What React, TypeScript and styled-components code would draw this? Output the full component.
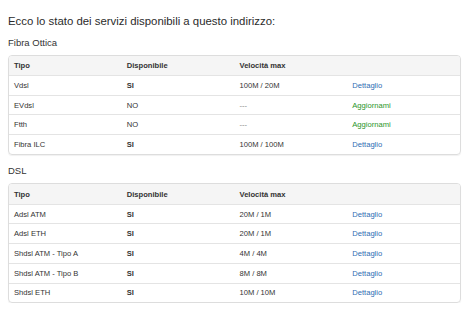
import React from 'react';
import styled, { createGlobalStyle } from 'styled-components';

interface Service {
  tipo: string;
  disponibile: boolean;
  velocita: string;
}

const fibra: Service[] = [
  { tipo: 'Vdsl', disponibile: true, velocita: '100M / 20M' },
  { tipo: 'EVdsl', disponibile: false, velocita: '---' },
  { tipo: 'Ftth', disponibile: false, velocita: '---' },
  { tipo: 'Fibra ILC', disponibile: true, velocita: '100M / 100M' }
];

const dsl: Service[] = [
  { tipo: 'Adsl ATM', disponibile: true, velocita: '20M / 1M' },
  { tipo: 'Adsl ETH', disponibile: true, velocita: '20M / 1M' },
  { tipo: 'Shdsl ATM - Tipo A', disponibile: true, velocita: '4M / 4M' },
  { tipo: 'Shdsl ATM - Tipo B', disponibile: true, velocita: '8M / 8M' },
  { tipo: 'Shdsl ETH', disponibile: true, velocita: '10M / 10M' }
];

const ServiceTable: React.FC<{ rows: Service[] }> = ({ rows }) => (
  <Panel>
    <HeaderRow>
      <Cell>Tipo</Cell>
      <Cell>Disponibile</Cell>
      <Cell>Velocità max</Cell>
      <Cell />
    </HeaderRow>
    {rows.map((r) => (
      <Row key={r.tipo}>
        <Cell>{r.tipo}</Cell>
        <Cell bold={r.disponibile}>{r.disponibile ? 'SI' : 'NO'}</Cell>
        <Cell muted={!r.disponibile}>{r.velocita}</Cell>
        <Cell>
          {r.disponibile ? (
            <Link>Dettaglio</Link>
          ) : (
            <Link upgrade>Aggiornami</Link>
          )}
        </Cell>
      </Row>
    ))}
  </Panel>
);

export default function App() {
  return (
    <>
      <GlobalStyle />
      <Page>
        <Title>Ecco lo stato dei servizi disponibili a questo indirizzo:</Title>
        <Section>
          <SectionLabel>Fibra Ottica</SectionLabel>
          <ServiceTable rows={fibra} />
        </Section>
        <Section>
          <SectionLabel>DSL</SectionLabel>
          <ServiceTable rows={dsl} />
        </Section>
      </Page>
    </>
  );
}

const GlobalStyle = createGlobalStyle`
  body {
    margin: 0;
    background: #fff;
    font-family: "Liberation Sans", Arial, sans-serif;
    color: #333;
  }
`;

const Page = styled.div`
  width: 474px;
  padding: 14px 13px 0 8px;
  box-sizing: border-box;
  display: flex;
  flex-direction: column;
`;

const Title = styled.div`
  font-size: 11.4px;
  line-height: 14px;
  color: #2b2b2b;
`;

const Section = styled.div`
  display: flex;
  flex-direction: column;
  gap: 6px;
  margin-top: 8.5px;

  & + & {
    margin-top: 10.5px;
  }
`;

const SectionLabel = styled.div`
  font-size: 9.5px;
  line-height: 12px;
  color: #333;
`;

const Panel = styled.div`
  border: 1px solid #ddd;
  border-radius: 4px;
  overflow: hidden;
  box-shadow: 0 1px 1px rgba(0, 0, 0, 0.06);
`;

const Row = styled.div`
  display: grid;
  grid-template-columns: repeat(4, 1fr);
  align-items: center;
  height: 19.7px;
  box-sizing: border-box;
  border-top: 1px solid #e4e4e4;
  font-size: 7.6px;
`;

const HeaderRow = styled(Row)`
  height: 19.5px;
  border-top: none;
  background: #f5f5f5;
  font-weight: bold;
`;

const Cell = styled.div<{ bold?: boolean; muted?: boolean }>`
  padding: 0 5px;
  white-space: nowrap;
  font-weight: ${(p) => (p.bold ? 'bold' : 'inherit')};
  color: ${(p) => (p.muted ? '#888' : '#333')};
`;

const Link = styled.span<{ upgrade?: boolean }>`
  color: ${(p) => (p.upgrade ? '#2a962a' : '#2f6db3')};
`;
